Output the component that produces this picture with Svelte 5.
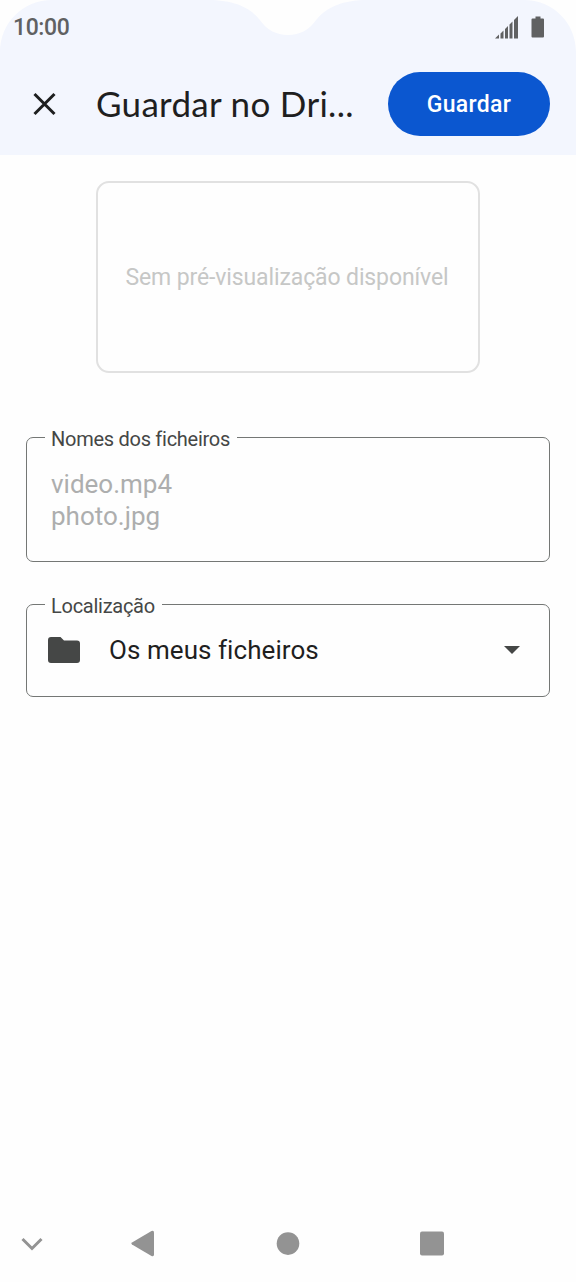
<script lang="ts">
	let time = "10:00"
	let title = "Guardar no Dri..."
	let files = ["video.mp4", "photo.jpg"]
	let folder = "Os meus ficheiros"
</script>

<div class="screen">
	<svg class="cutout" width="576" height="60" viewBox="0 0 576 60" aria-hidden="true">
		<path d="M0 0H52C23 0 0 23 0 52ZM576 0H524C553 0 576 23 576 52Z" />
		<path d="M208 0C235 0 250 8 259 19C267 30 276 35 288 35C300 35 309 30 317 19C326 8 341 0 368 0Z" />
	</svg>

	<header>
		<div class="status">
			<span class="time">{time}</span>
			<svg width="50" height="24" viewBox="0 0 50 24" fill="#606162" aria-hidden="true">
				<path d="M0 22.500L4 18.500V22.500ZM5.500 17.500L8.500 14.500V22.500H5.500ZM10 13L13 10V22.500H10ZM14.500 8.500L17.500 5.500V22.500H14.500ZM19 4L23 0V22.500H19Z" />
				<path d="M40.500 0.500H45.500V2.500H48Q49 2.500 49 3.500V20.500Q49 21.500 48 21.500H37.500Q36.500 21.500 36.500 20.500V3.500Q36.500 2.500 37.500 2.500H40.500Z" />
			</svg>
		</div>
		<div class="toolbar">
			<button class="close" aria-label="Fechar">
				<svg width="24" height="24" viewBox="0 0 24 24">
					<path d="M1.500 2L21.500 22M21.500 2L1.500 22" fill="none" stroke="#1d1e1f" stroke-width="3" />
				</svg>
			</button>
			<h1>{title}</h1>
			<button class="save">Guardar</button>
		</div>
	</header>

	<main>
		<div class="preview"><span>Sem pré-visualização disponível</span></div>

		<fieldset class="names">
			<legend>Nomes dos ficheiros</legend>
			{#each files as file}
				<div class="file">{file}</div>
			{/each}
		</fieldset>

		<fieldset class="location">
			<legend>Localização</legend>
			<div class="row">
				<svg width="32" height="26" viewBox="0 0 32 26" aria-hidden="true">
					<path d="M3 0H12.500L16 3.500H29Q32 3.500 32 6.500V23Q32 26 29 26H3Q0 26 0 23V3Q0 0 3 0Z" fill="#454746" />
				</svg>
				<span class="folder">{folder}</span>
				<svg width="16" height="8" viewBox="0 0 16 8" aria-hidden="true">
					<path d="M0 0H16L8 8Z" fill="#454746" />
				</svg>
			</div>
		</fieldset>
	</main>

	<nav>
		<svg width="576" height="32" viewBox="0 0 576 32" fill="#939393" aria-hidden="true">
			<path d="M22.500 11L32 20.500L41.500 11" fill="none" stroke="#939393" stroke-width="3" />
			<path d="M132 14.500Q130.500 15.500 132 16.500L151.500 28Q154 29 154 26.500V4.500Q154 2 151.500 3Z" />
			<circle cx="288" cy="15.600" r="11.300" />
			<rect x="420" y="3.500" width="24" height="24" rx="2" />
		</svg>
	</nav>
</div>

<style>
	:global(body) {
		background: #fefefe;
	}

	.screen {
		position: relative;
		display: flex;
		flex-direction: column;
		width: 576px;
		height: 1282px;
		overflow: hidden;
		font-family: Roboto, "Liberation Sans", sans-serif;
		color: #1f1f1f;
	}

	.cutout {
		position: absolute;
		top: 0;
		left: 0;
		fill: #fefefe;
	}

	header {
		height: 155px;
		background: #f3f6fe;
	}

	.status {
		display: flex;
		align-items: center;
		justify-content: space-between;
		height: 55px;
		padding: 0 31px 0 13px;
	}

	.time {
		font-size: 23px;
		font-weight: 500;
		letter-spacing: -0.4px;
		color: #606162;
	}

	.toolbar {
		display: flex;
		align-items: center;
		height: 98px;
		padding: 0 26px 0 33px;
	}

	button {
		border: none;
		padding: 0;
		background: none;
		font-family: inherit;
	}

	.close,
	.close svg {
		display: block;
	}

	h1 {
		flex: 1;
		margin: 0 0 2px 39px;
		font-family: Lato, sans-serif;
		font-size: 35px;
		font-weight: 400;
		line-height: 48px;
		letter-spacing: 0.3px;
		white-space: nowrap;
	}

	.save {
		width: 162px;
		height: 64px;
		border-radius: 32px;
		background: #0b57d0;
		color: white;
		font-size: 23px;
		font-weight: 500;
		letter-spacing: 0.3px;
	}

	main {
		flex: 1;
		padding: 26px 26px 0;
	}

	.preview {
		display: flex;
		align-items: center;
		justify-content: center;
		box-sizing: border-box;
		width: 384px;
		height: 192px;
		margin: 0 auto 52px;
		border: 2px solid #e1e1e1;
		border-radius: 13px;
		color: #c6c7c6;
		font-size: 23px;
		letter-spacing: -0.12px;
	}

	.preview span {
		margin-right: 2px;
	}

	fieldset {
		box-sizing: border-box;
		min-width: 0;
		margin: 0;
		padding: 0 0 0 18px;
		border: 1px solid #747775;
		border-radius: 7px;
	}

	legend {
		height: 24px;
		padding: 0 7px 0 6px;
		font-size: 20px;
		line-height: 28px;
		letter-spacing: -0.27px;
		color: #454746;
	}

	.names {
		height: 137px;
	}

	.file {
		padding-left: 6px;
		font-size: 26px;
		line-height: 32px;
		color: #adaeae;
	}

	legend + .file {
		margin-top: 19px;
	}

	.location {
		height: 105px;
		margin-top: 30px;
	}

	.row {
		display: flex;
		align-items: center;
		height: 32px;
		margin-top: 18px;
		padding: 0 29px 0 3px;
	}

	.folder {
		flex: 1;
		margin-left: 29px;
		font-size: 26px;
		letter-spacing: 0.06px;
	}

	nav {
		height: 54px;
	}

	nav svg {
		display: block;
	}
</style>
